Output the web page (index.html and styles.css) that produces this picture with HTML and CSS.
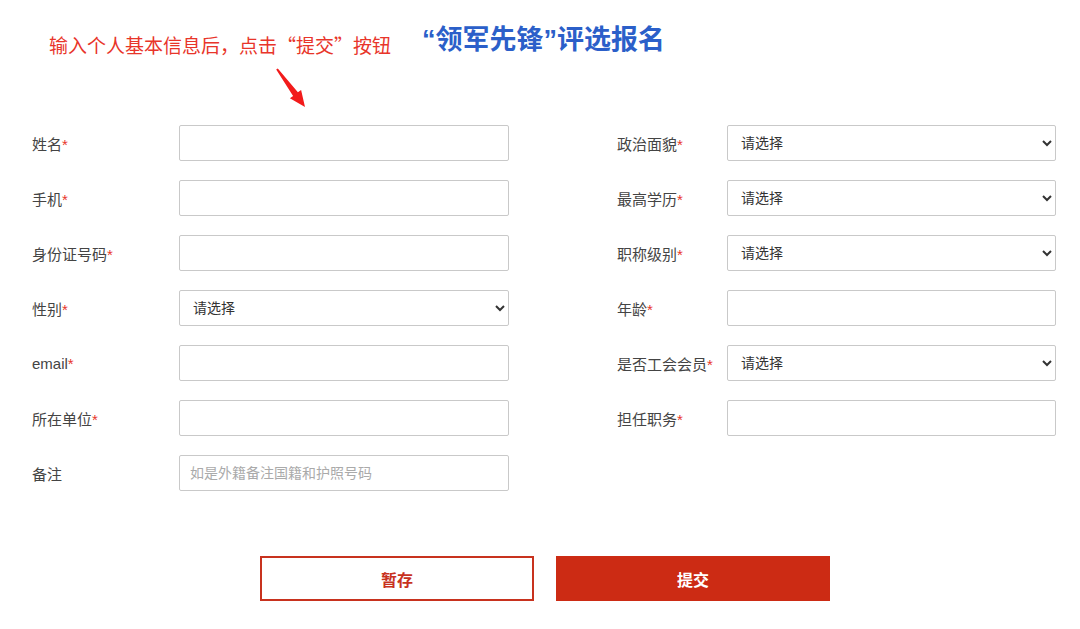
FILE: index.html
```html
<!DOCTYPE html>
<html lang="zh-CN">
<head>
  <meta charset="UTF-8">
  <meta name="viewport" content="width=device-width, initial-scale=1.0">
  <title>“领军先锋”评选报名</title>
  <link rel="stylesheet" href="styles.css">
</head>
<body>

  <!-- Header -->
  <div class="header">
    <p class="hint">输入个人基本信息后，点击“提交”按钮</p>
    <h1 class="title">“领军先锋”评选报名</h1>
    <svg class="arrow" width="50" height="56" viewBox="0 0 50 56">
      <polygon points="6.2,7.6 7.8,6.4 27.9,30.3 31.1,27.9 35,45 19.9,36.3 23.1,33.9" fill="#f21b1b"/>
    </svg>
  </div>

  <!-- Signup Form -->
  <form id="signupForm" class="signup">
    <div class="col col-left">
      <div class="field">
        <label for="name">姓名<span class="req">*</span></label>
        <input type="text" id="name" name="name">
      </div>
      <div class="field">
        <label for="phone">手机<span class="req">*</span></label>
        <input type="tel" id="phone" name="phone">
      </div>
      <div class="field">
        <label for="idNumber">身份证号码<span class="req">*</span></label>
        <input type="text" id="idNumber" name="idNumber">
      </div>
      <div class="field">
        <label for="gender">性别<span class="req">*</span></label>
        <select id="gender" name="gender">
          <option>请选择</option>
          <option>男</option>
          <option>女</option>
        </select>
      </div>
      <div class="field">
        <label for="email">email<span class="req">*</span></label>
        <input type="text" id="email" name="email">
      </div>
      <div class="field">
        <label for="company">所在单位<span class="req">*</span></label>
        <input type="text" id="company" name="company">
      </div>
      <div class="field">
        <label for="remark">备注</label>
        <input type="text" id="remark" name="remark" placeholder="如是外籍备注国籍和护照号码">
      </div>
    </div>

    <div class="col col-right">
      <div class="field">
        <label for="party">政治面貌<span class="req">*</span></label>
        <select id="party" name="party">
          <option>请选择</option>
        </select>
      </div>
      <div class="field">
        <label for="education">最高学历<span class="req">*</span></label>
        <select id="education" name="education">
          <option>请选择</option>
        </select>
      </div>
      <div class="field">
        <label for="titleLevel">职称级别<span class="req">*</span></label>
        <select id="titleLevel" name="titleLevel">
          <option>请选择</option>
        </select>
      </div>
      <div class="field">
        <label for="age">年龄<span class="req">*</span></label>
        <input type="text" id="age" name="age">
      </div>
      <div class="field">
        <label for="union">是否工会会员<span class="req">*</span></label>
        <select id="union" name="union">
          <option>请选择</option>
          <option>是</option>
          <option>否</option>
        </select>
      </div>
      <div class="field">
        <label for="position">担任职务<span class="req">*</span></label>
        <input type="text" id="position" name="position">
      </div>
    </div>
  </form>

  <div class="actions">
    <button type="button" class="btn btn-save">暂存</button>
    <button type="submit" form="signupForm" class="btn btn-submit">提交</button>
  </div>

</body>
</html>
```

FILE: styles.css
```css
body {
  font-family: "Liberation Sans", "Noto Sans CJK SC", sans-serif;
  margin: 0;
  padding: 0;
  background-color: #fff;
  color: #333;
}

.header {
  position: relative;
  height: 125px;
  box-sizing: border-box;
  padding: 24px 0 0 49px;
  display: flex;
  align-items: flex-start;
}

.hint {
  width: 373px;
  margin: 8px 0 0 0;
  font-family: "Noto Sans CJK SC", sans-serif;
  font-size: 19px;
  line-height: 26px;
  color: #e8352a;
}

.title {
  margin: 0;
  font-size: 27px;
  line-height: 32px;
  font-weight: bold;
  color: #2b5fc9;
}

.arrow {
  position: absolute;
  left: 270px;
  top: 62px;
}

.signup {
  display: flex;
  padding-left: 32px;
  gap: 108px;
}

.col {
  display: flex;
  flex-direction: column;
  gap: 19px;
}

.field {
  display: flex;
  align-items: center;
}

.field label {
  font-size: 15px;
  color: #444;
}

.col-left label {
  width: 147px;
}

.col-right label {
  width: 110px;
}

.req {
  color: #e8352a;
}

input, select {
  width: 330px;
  height: 36px;
  box-sizing: border-box;
  border: 1px solid #c9c9c9;
  border-radius: 2px;
  background-color: #fff;
  font-family: "Liberation Sans", "Noto Sans CJK SC", sans-serif;
  font-size: 14px;
  color: #333;
  padding: 0 10px;
  margin: 0;
}

.col-right input, .col-right select {
  width: 329px;
}

select {
  padding-left: 9px;
}

input::placeholder {
  color: #aaa;
}

.actions {
  display: flex;
  gap: 22px;
  padding-left: 260px;
  margin-top: 65px;
}

.btn {
  width: 274px;
  height: 45px;
  box-sizing: border-box;
  font-family: "Liberation Sans", "Noto Sans CJK SC", sans-serif;
  font-size: 16px;
  font-weight: bold;
  cursor: pointer;
}

.btn-save {
  background-color: #fff;
  color: #c8321e;
  border: 2px solid #c8321e;
}

.btn-submit {
  background-color: #cc2b14;
  color: #fff;
  border: none;
}
```
